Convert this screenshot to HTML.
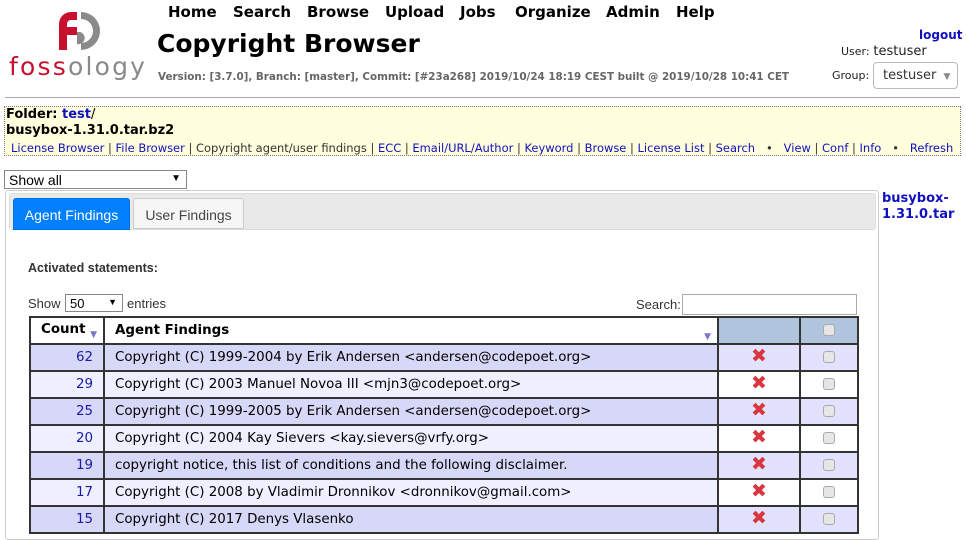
<!DOCTYPE html>
<html><head><meta charset="utf-8">
<style>
*{margin:0;padding:0;box-sizing:border-box}
body{width:966px;height:533px;overflow:hidden;background:#fff;font-family:"DejaVu Sans",Verdana,sans-serif;position:relative;color:#000}
.a{position:absolute;white-space:nowrap}
a{color:#1010c0;text-decoration:none}
table{border-collapse:collapse;position:absolute;left:29px;top:316px;font-size:13.4px;table-layout:fixed;width:828px}
td,th{border:2px solid #333;padding:0 10px;white-space:nowrap;overflow:hidden;line-height:20px;vertical-align:middle}
tr{height:27px}
th{text-align:left;font-weight:bold;background:#fff;position:relative}
td.c{text-align:right;color:#1a1aa8;padding-right:10px}
tr.o td{background:#d7d7f8}
tr.o td.x,tr.o td.k{background:#e2e2ff}
tr.e td{background:#eef0ff}
tr.e td.x,tr.e td.k{background:#fff}
.x,.k{text-align:center}
.cb{display:inline-block;width:12px;height:12px;border:1px solid #aaa;border-radius:3px;background:#e6e6e6;vertical-align:middle}
.xx{color:#d9363e;font-weight:bold;font-size:19px;line-height:1}
</style></head><body>
<svg class="a" style="left:56px;top:10px" width="48" height="42" viewBox="0 0 48 42">
<path d="M3 40 V14 A12 12 0 0 1 15 2 H21 V10 H15 A4 4 0 0 0 11 14 V17 H21 V25 H11 V40 Z" fill="#c8102e"/>
<path d="M25 2 A19 19 0 0 1 25 40 V33 A12 12 0 0 0 25 9 Z" fill="#8a8a8a"/>
<path d="M24 22 H21 V34 A6 6 0 0 0 24 22" fill="#8a8a8a"/>
</svg>
<div class="a" style="left:9px;top:52px;font-size:25px;letter-spacing:2.2px"><span style="color:#c8102e">foss</span><span style="color:#8a8a8a">ology</span></div>
<div class="a" style="left:168px;top:3px;font-size:15px;font-weight:bold">
<span style="position:absolute;left:0">Home</span><span style="position:absolute;left:65px">Search</span><span style="position:absolute;left:139px">Browse</span><span style="position:absolute;left:217px">Upload</span><span style="position:absolute;left:292px">Jobs</span><span style="position:absolute;left:347px">Organize</span><span style="position:absolute;left:438px">Admin</span><span style="position:absolute;left:508px">Help</span></div>
<div class="a" style="left:157px;top:29px;font-size:25px;font-weight:bold">Copyright Browser</div>
<div class="a" style="left:158px;top:71px;font-size:10.35px;font-weight:bold;color:#666">Version: [3.7.0], Branch: [master], Commit: [#23a268] 2019/10/24 18:19 CEST built @ 2019/10/28 10:41 CET</div>
<div class="a" style="left:919px;top:28px;font-size:12px;font-weight:bold"><a>logout</a></div>
<div class="a" style="left:841px;top:44px;font-size:12px;color:#222"><span style="font-size:11px">User:</span> <span style="font-size:13px">testuser</span></div>
<div class="a" style="left:832px;top:69px;font-size:11px;color:#222">Group:</div>
<div class="a" style="left:873px;top:62px;width:85px;height:27px;border:1px solid #bbb;border-radius:4px;font-size:13px;color:#333;padding:5px 0 0 9px">testuser <span style="font-size:9px;color:#888;margin-left:3px">▼</span></div>
<div class="a" style="left:5px;top:97px;width:955px;height:1px;background:#aaa"></div>
<div class="a" style="left:4px;top:106px;width:957px;height:50px;background:#ffffdd;border:1px dotted #777"></div>
<div class="a" style="left:6px;top:107px;font-size:13px;font-weight:bold">Folder: <a>test</a><span style="font-weight:normal">/</span></div>
<div class="a" style="left:6px;top:123px;font-size:13px;font-weight:bold">busybox-1.31.0.tar.bz2</div>
<div class="a" style="left:11px;top:141px;font-size:11.47px;color:#333"><a>License Browser</a> | <a>File Browser</a> | Copyright agent/user findings | <a>ECC</a> | <a>Email/URL/Author</a> | <a>Keyword</a> | <a>Browse</a> | <a>License List</a> | <a>Search</a> &nbsp; • &nbsp; <a>View</a> | <a>Conf</a> | <a>Info</a> &nbsp; • &nbsp; <a>Refresh</a></div>
<div class="a" style="left:4px;top:170px;width:183px;height:19px;border:1px solid #888;font-family:'Liberation Sans',sans-serif;font-size:14px;padding:1px 4px">Show all<span style="position:absolute;right:5px;top:2px;font-size:10px">▼</span></div>
<div class="a" style="left:5px;top:190px;width:874px;height:350px;border:1px solid #ccc;border-radius:3px"></div>
<div class="a" style="left:9px;top:193px;width:867px;height:37px;background:#e9e9e9;border:1px solid #ddd;border-radius:3px"></div>
<div class="a" style="left:13px;top:198px;width:117px;height:32px;background:#007fff;border:1px solid #0070e0;border-radius:3px 3px 0 0;color:#fff;font-family:'Liberation Sans',sans-serif;font-size:14px;text-align:center;padding-top:8px">Agent Findings</div>
<div class="a" style="left:133px;top:198px;width:111px;height:31px;background:#f6f6f6;border:1px solid #ccc;border-radius:3px 3px 0 0;color:#454545;font-family:'Liberation Sans',sans-serif;font-size:14px;text-align:center;padding-top:8px">User Findings</div>
<div class="a" style="left:28px;top:261px;font-family:'Liberation Sans',sans-serif;font-size:12.5px;font-weight:bold;color:#333">Activated statements:</div>
<div class="a" style="left:28px;top:296px;font-family:'Liberation Sans',sans-serif;font-size:13px;color:#333">Show</div>
<div class="a" style="left:65px;top:294px;width:58px;height:18px;border:1px solid #888;font-family:'Liberation Sans',sans-serif;font-size:13px;padding:1px 4px">50<span style="position:absolute;right:5px;top:2px;font-size:9px">▼</span></div>
<div class="a" style="left:127px;top:296px;font-family:'Liberation Sans',sans-serif;font-size:13px;color:#333">entries</div>
<div class="a" style="left:636px;top:297px;font-family:'Liberation Sans',sans-serif;font-size:13px;color:#333">Search:</div>
<div class="a" style="left:682px;top:294px;width:175px;height:21px;border:1px solid #aaa"></div>
<div class="a" style="left:882px;top:191px;font-size:13px;font-weight:bold;line-height:16px"><a>busybox-<br>1.31.0.tar</a></div>
<table>
<colgroup><col style="width:74px"><col style="width:614px"><col style="width:82px"><col style="width:58px"></colgroup>
<tr><th style="padding-left:10px">Count <span style="color:#7777cc;font-size:9px;position:relative;top:4px">▼</span></th><th>Agent Findings<span style="position:absolute;right:6px;top:9px;color:#7777cc;font-size:9px">▼</span></th><th style="background:#b0c4de"></th><th style="background:#b0c4de;text-align:center"><span class="cb"></span></th></tr>
<tr class="o"><td class="c">62</td><td>Copyright (C) 1999-2004 by Erik Andersen &lt;andersen@codepoet.org&gt;</td><td class="x"><span class="xx">✖</span></td><td class="k"><span class="cb"></span></td></tr>
<tr class="e"><td class="c">29</td><td>Copyright (C) 2003 Manuel Novoa III &lt;mjn3@codepoet.org&gt;</td><td class="x"><span class="xx">✖</span></td><td class="k"><span class="cb"></span></td></tr>
<tr class="o"><td class="c">25</td><td>Copyright (C) 1999-2005 by Erik Andersen &lt;andersen@codepoet.org&gt;</td><td class="x"><span class="xx">✖</span></td><td class="k"><span class="cb"></span></td></tr>
<tr class="e"><td class="c">20</td><td>Copyright (C) 2004 Kay Sievers &lt;kay.sievers@vrfy.org&gt;</td><td class="x"><span class="xx">✖</span></td><td class="k"><span class="cb"></span></td></tr>
<tr class="o"><td class="c">19</td><td>copyright notice, this list of conditions and the following disclaimer.</td><td class="x"><span class="xx">✖</span></td><td class="k"><span class="cb"></span></td></tr>
<tr class="e"><td class="c">17</td><td>Copyright (C) 2008 by Vladimir Dronnikov &lt;dronnikov@gmail.com&gt;</td><td class="x"><span class="xx">✖</span></td><td class="k"><span class="cb"></span></td></tr>
<tr class="o"><td class="c">15</td><td>Copyright (C) 2017 Denys Vlasenko</td><td class="x"><span class="xx">✖</span></td><td class="k"><span class="cb"></span></td></tr>
</table>
</body></html>
